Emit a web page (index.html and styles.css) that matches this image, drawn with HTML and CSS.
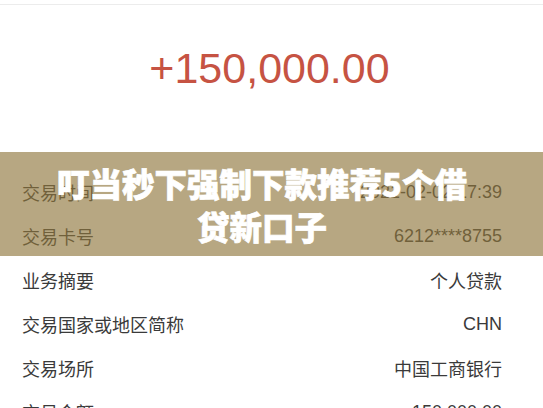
FILE: index.html
```html
<!DOCTYPE html>
<html lang="zh-CN">
<head>
<meta charset="utf-8">
<title>交易详情</title>
<link rel="stylesheet" href="styles.css">
</head>
<body>
<div class="page">
  <div class="topline"></div>
  <div class="hero">
    <div class="amount">+150,000.00</div>
  </div>
  <div class="rows">
    <div class="row"><span class="label">交易时间</span><span class="value">2021-02-02 17:39</span></div>
    <div class="row"><span class="label">交易卡号</span><span class="value">6212****8755</span></div>
    <div class="row"><span class="label">业务摘要</span><span class="value">个人贷款</span></div>
    <div class="row"><span class="label">交易国家或地区简称</span><span class="value">CHN</span></div>
    <div class="row"><span class="label">交易场所</span><span class="value">中国工商银行</span></div>
    <div class="row"><span class="label">交易金额</span><span class="value">150,000.00</span></div>
  </div>
  <div class="banner">
    <h1 class="banner-title">叮当秒下强制下款推荐5个借贷新口子</h1>
  </div>
</div>
</body>
</html>
```

FILE: styles.css
```css
html, body {
  margin: 0;
  padding: 0;
  background: #ffffff;
  overflow: hidden;
}
.page {
  position: relative;
  width: 543px;
  height: 408px;
  overflow: hidden;
  font-family: "Liberation Sans", "Noto Sans CJK SC", sans-serif;
  color: #333333;
}
.topline {
  height: 4px;
  border-bottom: 1px solid #ececec;
}
.hero {
  height: 165px;
  box-sizing: border-box;
  padding: 38px 4px 0 0;
  display: flex;
  justify-content: center;
}
.amount {
  font-size: 43px;
  line-height: 50px;
  color: #c65343;
}
.rows {
  display: flex;
  flex-direction: column;
}
.row {
  height: 44px;
  display: flex;
  align-items: center;
  justify-content: space-between;
  padding: 0 41px 0 22px;
  font-size: 18px;
  color: #3a3a3a;
}
.banner {
  position: absolute;
  left: 0;
  right: 0;
  top: 152px;
  height: 104px;
  box-sizing: border-box;
  padding: 0 41px 0 22px;
  background: rgba(143, 118, 59, 0.64);
  display: flex;
  align-items: center;
  justify-content: center;
}
.banner-title {
  margin: 0;
  width: 430px;
  text-align: center;
  color: #ffffff;
  font-family: "Noto Sans CJK SC", sans-serif;
  font-weight: 900;
  font-size: 32.5px;
  line-height: 43px;
  -webkit-text-stroke: 0.7px #ffffff;
}
```
